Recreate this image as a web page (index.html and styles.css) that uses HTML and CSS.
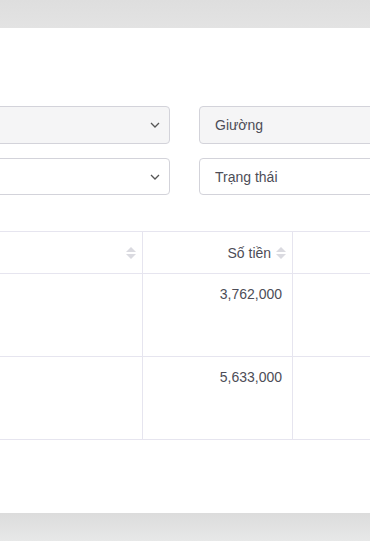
FILE: index.html
```html
<!DOCTYPE html>
<html lang="vi">
<head>
<meta charset="utf-8">
<link rel="stylesheet" href="styles.css">
</head>
<body>
<div class="page">
  <div class="backdrop-top"></div>
  <div class="modal">
    <div class="filters">
      <div class="field select disabled"><span></span><svg class="chev" width="10" height="6" viewBox="0 0 10 6"><path d="M1 1l4 4 4-4" fill="none" stroke="#555" stroke-width="1.3"/></svg></div>
      <div class="field disabled"><span>Giường</span></div>
      <div class="field select"><span></span><svg class="chev" width="10" height="6" viewBox="0 0 10 6"><path d="M1 1l4 4 4-4" fill="none" stroke="#555" stroke-width="1.3"/></svg></div>
      <div class="field"><span>Trạng thái</span></div>
    </div>
    <table class="grid">
      <colgroup><col class="c1"><col class="c2"><col class="c3"></colgroup>
      <thead>
        <tr>
          <th><span class="sort"><i class="up"></i><i class="down"></i></span></th>
          <th>Số tiền <span class="sort"><i class="up"></i><i class="down"></i></span></th>
          <th></th>
        </tr>
      </thead>
      <tbody>
        <tr><td></td><td>3,762,000</td><td></td></tr>
        <tr><td></td><td>5,633,000</td><td></td></tr>
      </tbody>
    </table>
  </div>
  <div class="backdrop-bottom"></div>
</div>
</body>
</html>
```

FILE: styles.css
```css
html, body {
  margin: 0;
  padding: 0;
  background: #ffffff;
}
body {
  font-family: "Liberation Sans", Arial, sans-serif;
  font-size: 14px;
  color: #4d4d57;
  overflow: hidden;
}
.page {
  width: 370px;
  height: 541px;
  display: flex;
  flex-direction: column;
  overflow: hidden;
}
.backdrop-top {
  height: 28px;
  flex: none;
  background: linear-gradient(#dedede, #e3e3e3);
}
.backdrop-bottom {
  height: 28px;
  flex: none;
  background: linear-gradient(#dcdcdc, #e7e8e8);
}
.modal {
  flex: 1;
  background: #fff;
  padding-top: 78px;
  overflow: hidden;
}
.filters {
  display: grid;
  grid-template-columns: 200px 200px;
  column-gap: 29px;
  row-gap: 14px;
  margin-left: -30px;
  width: 429px;
}
.field {
  height: 38px;
  box-sizing: border-box;
  border: 1px solid #d3d3da;
  border-radius: 4px;
  background: #fff;
  display: flex;
  align-items: center;
  justify-content: space-between;
  padding: 0 9px 0 15px;
  color: #4d4d57;
}
.field:nth-child(3), .field:nth-child(4) {
  height: 37px;
}
.field.disabled {
  background: #f5f5f6;
}
.chev {
  display: block;
}
.grid {
  margin-top: 36px;
  margin-left: -60px;
  border-collapse: collapse;
  table-layout: fixed;
  width: 520px;
}
.grid th, .grid td {
  border: 1px solid #e6e5ef;
  padding: 0 10px;
  text-align: right;
  font-weight: normal;
  color: #4d4d57;
  box-sizing: border-box;
}
.grid th {
  height: 42px;
  vertical-align: middle;
  padding-right: 6px;
}
.grid td {
  height: 83px;
  vertical-align: top;
  padding-top: 12px;
  line-height: 16px;
}
.c1 { width: 202px; }
.c2 { width: 150px; }
.c3 { width: 168px; }
.sort {
  display: inline-flex;
  flex-direction: column;
  gap: 2px;
  vertical-align: middle;
  margin-left: 1px;
  position: relative;
  top: -1px;
}
.sort i {
  display: block;
  width: 0;
  height: 0;
  border-left: 5px solid transparent;
  border-right: 5px solid transparent;
}
.sort .up { border-bottom: 5px solid #dadae0; }
.sort .down { border-top: 5px solid #dadae0; }
```
